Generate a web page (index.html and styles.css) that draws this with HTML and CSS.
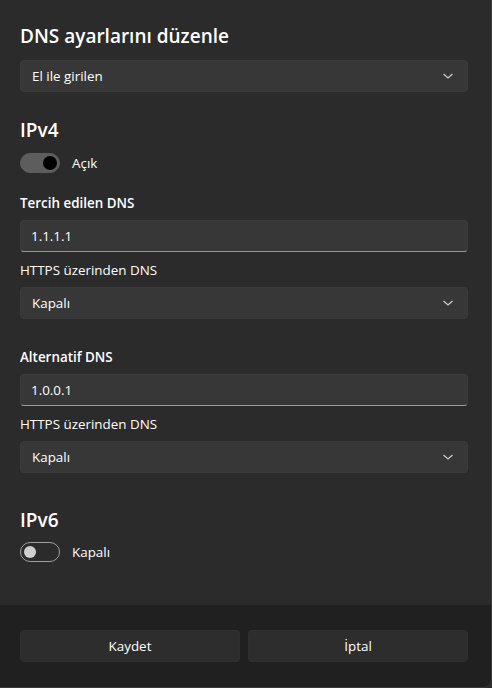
FILE: index.html
```html
<!DOCTYPE html>
<html lang="tr">
<head>
    <meta charset="UTF-8">
    <meta name="viewport" content="width=device-width, initial-scale=1.0">
    <title>DNS ayarlarını düzenle</title>
    <link rel="stylesheet" href="styles.css">
</head>
<body>
    <div class="dialog">
        <div class="content">
            <h1>DNS ayarlarını düzenle</h1>
            <div class="select mode-select">
                <span>El ile girilen</span>
                <svg class="chevron" width="12" height="8" viewBox="0 0 12 8"><polyline points="1.5,2 6,6 10.5,2" fill="none" stroke="#cfcfcf" stroke-width="1.2"/></svg>
            </div>

            <!-- IPv4 -->
            <h2 class="section">IPv4</h2>
            <div class="toggle-row">
                <div class="toggle on"><span class="knob"></span></div>
                <span>Açık</span>
            </div>

            <div class="label strong first">Tercih edilen DNS</div>
            <div class="textbox">1.1.1.1</div>
            <div class="label">HTTPS üzerinden DNS</div>
            <div class="select">
                <span>Kapalı</span>
                <svg class="chevron" width="12" height="8" viewBox="0 0 12 8"><polyline points="1.5,2 6,6 10.5,2" fill="none" stroke="#cfcfcf" stroke-width="1.2"/></svg>
            </div>

            <div class="label strong second">Alternatif DNS</div>
            <div class="textbox">1.0.0.1</div>
            <div class="label">HTTPS üzerinden DNS</div>
            <div class="select">
                <span>Kapalı</span>
                <svg class="chevron" width="12" height="8" viewBox="0 0 12 8"><polyline points="1.5,2 6,6 10.5,2" fill="none" stroke="#cfcfcf" stroke-width="1.2"/></svg>
            </div>

            <!-- IPv6 -->
            <h2 class="section v6">IPv6</h2>
            <div class="toggle-row">
                <div class="toggle"><span class="knob"></span></div>
                <span>Kapalı</span>
            </div>
        </div>

        <div class="footer">
            <button type="button">Kaydet</button>
            <button type="button">İptal</button>
        </div>
    </div>
</body>
</html>
```

FILE: styles.css
```css
html, body {
    margin: 0;
    height: 100%;
}
body {
    font-family: "Open Sans", "Noto Sans", sans-serif;
    font-size: 13.4px;
    color: #ffffff;
    background-color: #2b2b2b;
}
.dialog {
    display: flex;
    flex-direction: column;
    height: 688px;
    box-sizing: border-box;
    border-right: 1px solid #3a3a3a;
    border-bottom: 1px solid #3a3a3a;
    border-bottom-right-radius: 8px;
    overflow: hidden;
}
.content {
    flex: 1;
    padding: 22px 23px 0 20px;
}
h1 {
    margin: 0;
    font-size: 19px;
    font-weight: 600;
    line-height: 28px;
}
.select,
.textbox {
    height: 32px;
    box-sizing: border-box;
    background-color: #373737;
    border: 1px solid #3c3c3c;
    border-radius: 4px;
    padding: 0 13px 0 11px;
    display: flex;
    align-items: center;
    margin-top: 7px;
}
.mode-select {
    margin-top: 10px;
}
.select span {
    flex: 1;
}
.textbox {
    border-bottom-color: #9a9a9a;
    padding-left: 10px;
}
.section {
    margin: 24px 0 0 0;
    font-size: 19px;
    font-weight: 600;
    line-height: 28px;
}
.section.v6 {
    margin-top: 33px;
}
.toggle-row {
    display: flex;
    align-items: center;
    gap: 12px;
    margin-top: 9px;
    height: 20px;
}
.v6 + .toggle-row {
    margin-top: 8px;
}
.toggle {
    width: 40px;
    height: 20px;
    box-sizing: border-box;
    border-radius: 10px;
    border: 1px solid #9d9d9d;
    display: flex;
    align-items: center;
    padding: 0 3px;
}
.toggle .knob {
    width: 12px;
    height: 12px;
    border-radius: 50%;
    background-color: #cfcfcf;
}
.toggle.on {
    background-color: #5d5d5d;
    border-color: #5d5d5d;
    justify-content: flex-end;
    padding-right: 2px;
}
.toggle.on .knob {
    width: 14px;
    height: 14px;
    background-color: #000000;
}
.label {
    line-height: 20px;
    margin-top: 8px;
}
.label.strong {
    font-weight: 600;
}
.label.first {
    margin-top: 20px;
}
.label.second {
    margin-top: 28px;
}
.footer {
    height: 82px;
    box-sizing: border-box;
    background-color: #202020;
    padding: 25px 23px 0 20px;
    display: flex;
    gap: 8px;
}
.footer button {
    flex: 1;
    height: 32px;
    background-color: #2d2d2d;
    border: 1px solid #303030;
    border-radius: 4px;
    color: #ffffff;
    font-family: inherit;
    font-size: 13.4px;
}
```
